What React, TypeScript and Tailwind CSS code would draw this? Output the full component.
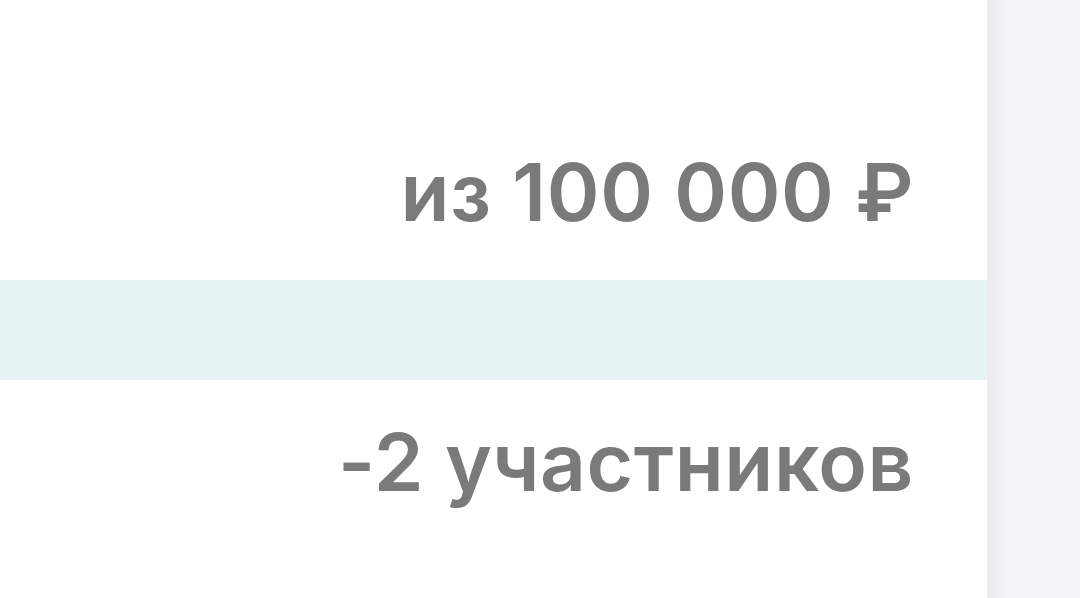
export default function App() {
  return (
    <div className="flex h-[598px] w-[1080px] overflow-hidden bg-[#f4f5f8]" style={{ fontFamily: "Inter, Roboto, sans-serif" }}>
      <div className="flex w-[987px] shrink-0 flex-col bg-white">
        <div className="h-[280px] pr-[73px] pt-[152px] text-right">
          <span className="block text-[80px] font-semibold leading-[80px] tracking-[0.6px] text-[#7a7a7a]">из 100 000 ₽</span>
        </div>
        <div className="h-[100px] bg-[#e6f4f4]" />
        <div className="flex-1 pr-[73px] pt-[42px] text-right">
          <span className="block text-[80px] font-semibold leading-[80px] tracking-[0.6px] text-[#7a7a7a]">-2 участников</span>
        </div>
      </div>
      <div className="h-full w-[24px] shrink-0 bg-gradient-to-r from-[#ebecef] to-[#f4f5f8]" />
    </div>
  );
}
